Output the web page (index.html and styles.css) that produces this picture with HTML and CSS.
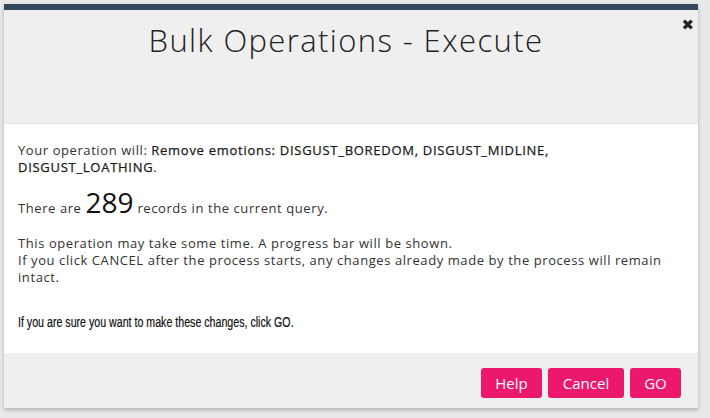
FILE: index.html
```html
<!DOCTYPE html>
<html>
<head>
<meta charset="utf-8">
<link rel="stylesheet" href="styles.css">
</head>
<body>
<div class="page">
  <div class="modal">
    <div class="modal-header">
      <h1 class="title">Bulk Operations - Execute</h1>
      <span class="close">&#x2716;</span>
    </div>
    <div class="modal-body">
      <p class="op">Your operation will: <b class="strong">Remove emotions: DISGUST_BOREDOM, DISGUST_MIDLINE,</b><br><b class="strong">DISGUST_LOATHING</b>.</p>
      <p class="count">There are <span class="num">289</span> records in the current query.</p>
      <p class="note">This operation may take some time. A progress bar will be shown.<br>If you click CANCEL after the process starts, any changes already made by the process will remain intact.</p>
      <p class="confirm"><span class="narrow">If you are sure you want to make these changes, click GO.</span></p>
    </div>
    <div class="modal-footer">
      <button class="btn btn-help">Help</button>
      <button class="btn btn-cancel">Cancel</button>
      <button class="btn btn-go">GO</button>
    </div>
  </div>
</div>
</body>
</html>
```
FILE: styles.css
```css
html, body {
  margin: 0;
  padding: 0;
}
body {
  background: #e9e9e9;
  font-family: "Open Sans", "DejaVu Sans", sans-serif;
  width: 710px;
  height: 418px;
  overflow: hidden;
}
.page {
  padding: 4px;
}
.modal {
  width: 694px;
  background: #fff;
  border-top: 6px solid #34495e;
  box-shadow: 0 2px 4px rgba(0,0,0,0.25);
}
.modal-header {
  position: relative;
  height: 114px;
  background: #efefef;
  border-bottom: 1px solid #e4e4e4;
  box-sizing: border-box;
}
.title {
  margin: 0;
  padding-top: 8px;
  text-align: center;
  font-weight: 300;
  font-size: 31px;
  line-height: 44px;
  color: #222;
  letter-spacing: 1.4px;
  padding-right: 10px;
}
.close {
  position: absolute;
  right: 4px;
  top: 4px;
  font-size: 15px;
  color: #222;
}
.modal-body {
  height: 229px;
  box-sizing: border-box;
  padding: 18px 14px 0;
  font-size: 13px;
  color: #333;
  line-height: 17px;
  letter-spacing: 0.58px;
}
.modal-body p {
  margin: 0;
}
.modal-body .op {
  margin-bottom: 12px;
}
.strong {
  color: #1a1a1a;
  font-weight: 500;
  -webkit-text-stroke: 0.25px #1a1a1a;
  letter-spacing: 0.72px;
}
.modal-body .count {
  line-height: 28px;
  margin-bottom: 13px;
}
.num {
  font-size: 28px;
  font-weight: 500;
  color: #111;
  letter-spacing: 0;
}
.modal-body .note {
  margin-bottom: 28px;
}
.confirm {
  color: #111;
  letter-spacing: 0;
}
.narrow {
  display: inline-block;
  font-family: "Liberation Sans", Arial, sans-serif;
  font-size: 14px;
  transform: scaleX(0.76);
  transform-origin: left center;
  white-space: nowrap;
  -webkit-text-stroke: 0.2px #111;
}
.modal-footer {
  height: 55px;
  background: #efefef;
  display: flex;
  justify-content: flex-end;
  align-items: flex-start;
  gap: 6px;
  padding: 15px 17px 0 0;
  box-sizing: border-box;
}
.btn {
  background: #ec186d;
  color: #fff;
  border: none;
  border-radius: 3px;
  font-family: "Open Sans", sans-serif;
  font-size: 15px;
  height: 30px;
  padding: 0;
  text-align: center;
}
.btn-help {
  width: 61px;
}
.btn-cancel {
  width: 76px;
}
.btn-go {
  width: 51px;
}
```
